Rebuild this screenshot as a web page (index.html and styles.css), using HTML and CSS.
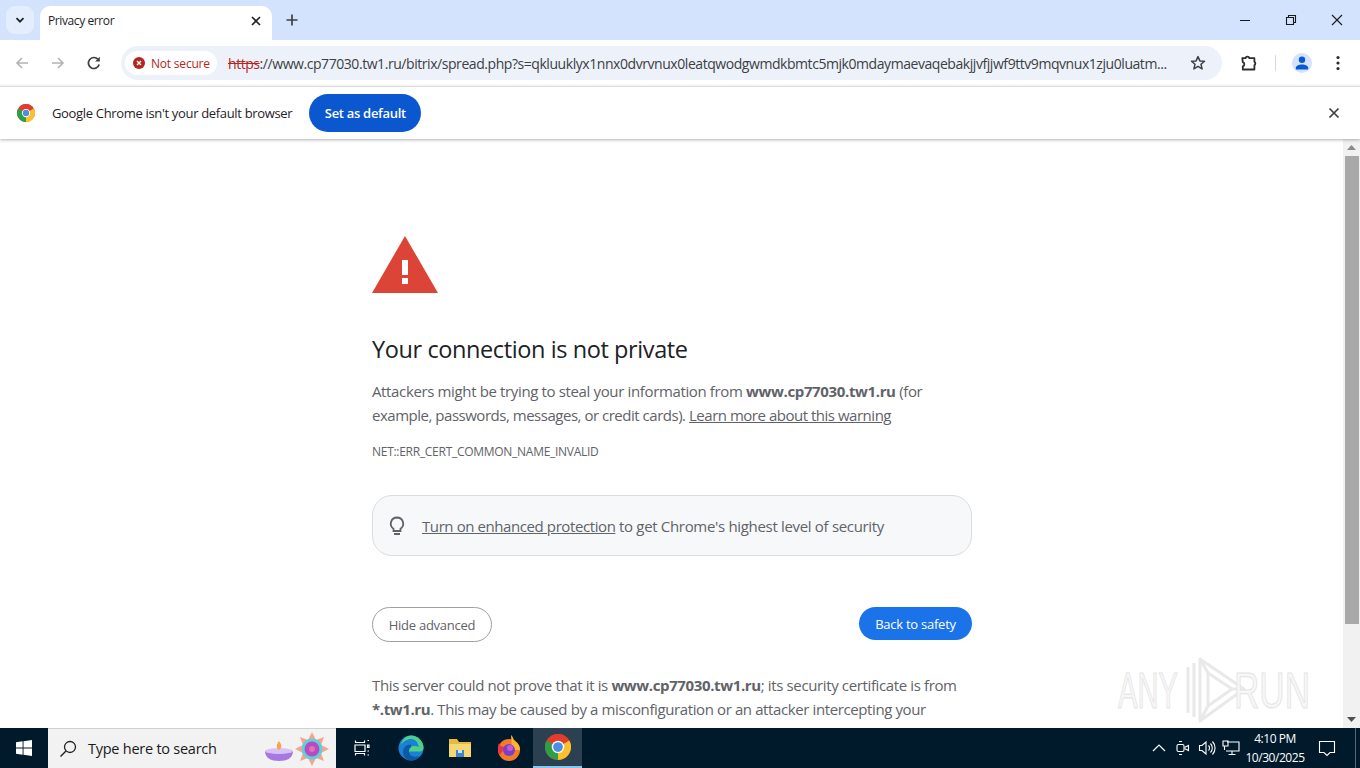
FILE: index.html
```html
<!DOCTYPE html>
<html lang="en">
<head>
<meta charset="utf-8">
<title>Privacy error</title>
<link rel="stylesheet" href="styles.css">
</head>
<body>
<div class="screen">
  <header class="tabstrip">
    <div class="tabsearch"><svg width="12" height="12" viewBox="0 0 12 12"><path d="M2.500 4.200 6 7.700l3.500-3.500" fill="none" stroke="#1f2328" stroke-width="1.800"/></svg></div>
    <div class="tab">
      <span class="tabtitle">Privacy error</span>
      <svg class="tabclose" width="12" height="12" viewBox="0 0 12 12"><path d="M2 2l8 8M10 2l-8 8" stroke="#1f2328" stroke-width="1.600"/></svg>
    </div>
    <svg class="newtab" width="14" height="14" viewBox="0 0 14 14"><path d="M7 1.500v11M1.500 7h11" stroke="#3c4043" stroke-width="1.700"/></svg>
    <div class="winctl">
      <svg width="46" height="40" viewBox="0 0 46 40"><path d="M18 20.500h10" stroke="#1a1a1a" stroke-width="1"/></svg>
      <svg width="46" height="40" viewBox="0 0 46 40"><path d="M18.500 17.500h7v7h-7zM20.500 17.500v-2h7v7h-2" fill="none" stroke="#1a1a1a" stroke-width="1.100"/></svg>
      <svg width="46" height="40" viewBox="0 0 46 40"><path d="M18 15l10 10M28 15l-10 10" stroke="#1a1a1a" stroke-width="1.100"/></svg>
    </div>
  </header>

  <nav class="toolbar">
    <svg class="navicon" width="16" height="16" viewBox="0 0 16 16"><path d="M14 8H3M8 3 3 8l5 5" fill="none" stroke="#b0b3b7" stroke-width="1.600"/></svg>
    <svg class="navicon" width="16" height="16" viewBox="0 0 16 16"><path d="M2 8h11M8 3l5 5-5 5" fill="none" stroke="#b0b3b7" stroke-width="1.600"/></svg>
    <svg class="navicon" width="16" height="16" viewBox="0 0 16 16"><path d="M13.200 9.500A5.500 5.500 0 1 1 12 4.300" fill="none" stroke="#3c4043" stroke-width="1.700"/><path d="M13.800 1.800v4.600H9.200z" fill="#3c4043"/></svg>
    <div class="omnibox">
      <div class="chip">
        <svg width="12" height="12" viewBox="0 0 12 12"><circle cx="6" cy="6" r="6" fill="#b3261e"/><path d="M4 4l4 4M8 4 4 8" stroke="#fff" stroke-width="1.400"/></svg>
        <span>Not secure</span>
      </div>
      <div class="url"><span class="scheme">https</span>://www.cp77030.tw1.ru/bitrix/spread.php?s=qkluuklyx1nnx0dvrvnux0leatqwodgwmdkbmtc5mjk0mdaymaevaqebakjjvfjjwf9ttv9mqvnux1zju0luatm...</div>
      <svg class="star" width="16" height="16" viewBox="0 0 16 16"><path d="M8 1.600l1.900 4.300 4.600.4-3.500 3 1.100 4.600L8 11.400l-4.100 2.500L5 9.300l-3.500-3 4.600-.4z" fill="none" stroke="#3c4043" stroke-width="1.500" stroke-linejoin="round"/></svg>
    </div>
    <svg class="ext" width="18" height="18" viewBox="0 0 18 18"><path d="M2.300 4.200h3.200a2 2 0 0 1 3.900 0h5v3.600a2 2 0 0 1 0 3.400v4.300H2.800v-3.200a2.200 2.200 0 0 0 0-4.200z" fill="none" stroke="#2b2e31" stroke-width="1.800" stroke-linejoin="round"/></svg>
    <span class="tooldiv"></span>
    <div class="avatar"><svg width="14" height="14" viewBox="0 0 14 14"><circle cx="7" cy="3.800" r="3.200" fill="#0b57d0"/><path d="M0.800 13.400v-1.600c0-2 2.800-3.400 6.200-3.400s6.200 1.400 6.200 3.400v1.600z" fill="#0b57d0"/></svg></div>
    <svg class="kebab" width="4" height="16" viewBox="0 0 4 16"><circle cx="2" cy="2.500" r="1.600" fill="#2b2e31"/><circle cx="2" cy="8" r="1.600" fill="#2b2e31"/><circle cx="2" cy="13.500" r="1.600" fill="#2b2e31"/></svg>
  </nav>

  <aside class="infobar">
    <svg class="chromelogo" width="18" height="18" viewBox="0 0 48 48"><circle cx="24" cy="24" r="24" fill="#e33b2e"/><path d="M24 24 44.800 12A24 24 0 0 1 24 48z" fill="#fbc02d"/><path d="M24 24 24 48A24 24 0 0 1 3.200 12z" fill="#2f9e44"/><path d="M3.200 12A24 24 0 0 1 44.800 12H24z" fill="#e33b2e"/><circle cx="24" cy="24" r="11" fill="#fff"/><circle cx="24" cy="24" r="8.500" fill="#4a90e2"/></svg>
    <span class="infotext">Google Chrome isn't your default browser</span>
    <button class="setdefault">Set as default</button>
    <svg class="infoclose" width="12" height="12" viewBox="0 0 12 12"><path d="M1.500 1.500l9 9M10.500 1.500l-9 9" stroke="#3c4043" stroke-width="1.700"/></svg>
  </aside>

  <div class="viewport">
    <main class="page">
      <svg class="warn" width="66" height="57" viewBox="0 0 66 57"><path d="M33 0 66 57H0z" fill="#db4437"/><path d="M30 24h6v15h-6zM30 42h6v6h-6z" fill="#fff"/></svg>
      <h1>Your connection is not private</h1>
      <p class="lead">Attackers might be trying to steal your information from <b>www.cp77030.tw1.ru</b> (for<br><span class="tight">example, passwords, messages, or credit cards). <a href="#">Learn more about this warning</a></span></p>
      <div class="errcode">NET::ERR_CERT_COMMON_NAME_INVALID</div>
      <div class="promo">
        <svg width="18" height="20" viewBox="0 0 18 20"><path d="M9 1.500a6.200 6.200 0 0 0-3.500 11.300v2.200h7v-2.200A6.200 6.200 0 0 0 9 1.500z" fill="none" stroke="#5f6368" stroke-width="1.800"/><path d="M6 18h6" stroke="#5f6368" stroke-width="2"/></svg>
        <span><a href="#">Turn on enhanced protection</a> to get Chrome's highest level of security</span>
      </div>
      <div class="actions">
        <button class="hide">Hide advanced</button>
        <button class="safety">Back to safety</button>
      </div>
      <p class="detail">This server could not prove that it is <b>www.cp77030.tw1.ru</b>; its security certificate is from<br><span class="tight2"><b>*.tw1.ru</b>. This may be caused by a misconfiguration or an attacker intercepting your</span></p>
    </main>
    <div class="scrollbar">
      <svg width="9" height="5" viewBox="0 0 9 5"><path d="M4.500 0 9 5H0z" fill="#8a8a8a"/></svg>
      <div class="thumb"></div>
      <svg width="9" height="5" viewBox="0 0 9 5"><path d="M0 0h9L4.500 5z" fill="#505050"/></svg>
    </div>
    <svg class="watermark" width="200" height="70" viewBox="0 0 200 70">
      <g class="wm-shape">
        <path d="M74 12v46M80 8v54"/>
        <path d="M86 4l44 30-44 32zM94 18l24 16-24 17z"/>
        <path d="M86 4l8 14M86 66l8-15M130 34h-12"/>
      </g>
      <text class="wm-text" x="4" y="53" textLength="60" lengthAdjust="spacingAndGlyphs">ANY</text>
      <text class="wm-text" x="120" y="53" textLength="76" lengthAdjust="spacingAndGlyphs">RUN</text>
    </svg>
  </div>

  <footer class="taskbar">
    <div class="start"><svg width="16" height="16" viewBox="0 0 16 16"><path d="M0 2.200 6.600 1.300v6.200H0zM7.500 1.200 16 0v7.500H7.500zM0 8.500h6.600v6.200L0 13.800zM7.500 8.500H16V16l-8.500-1.200z" fill="#fff"/></svg></div>
    <div class="search">
      <svg width="18" height="18" viewBox="0 0 18 18"><circle cx="11" cy="7" r="5.500" fill="none" stroke="#222" stroke-width="1.300"/><path d="M7 11 1.500 16.500" stroke="#222" stroke-width="1.500"/></svg>
      <span>Type here to search</span>
      <svg class="diwali" width="66" height="34" viewBox="0 0 66 34">
        <path d="M1 19h28c0 7-6 10-14 10S1 26 1 19z" fill="#a678e0"/><ellipse cx="15" cy="19" rx="14" ry="3" fill="#d8c2f5"/><path d="M15 9c3 4 3 7 0 9-3-2-3-5 0-9z" fill="#f5a54a"/>
        <g fill="#f6a58c"><path d="M48 0l4 8h-8zM48 34l-4-8h8zM31 17l8-4v8zM65 17l-8 4v-8zM36 5l8 3-5 5zM60 5l-3 8-5-5zM36 29l3-8 5 5zM60 29l-8-3 5-5z"/></g>
        <circle cx="48" cy="17" r="10.500" fill="#5fd0d8"/><circle cx="48" cy="17" r="7.500" fill="#b44cc4"/><circle cx="48" cy="17" r="3" fill="#e36fb5"/>
      </svg>
    </div>
    <div class="taskicons">
      <div class="ticon"><svg class="tview" width="18" height="18" viewBox="0 0 18 18"><path d="M3.500 1.500v2h9v-2M3.500 16.500v-2h9v2M3 6h10v6.500H3z" fill="none" stroke="#fff" stroke-width="1.200"/><path d="M15.500 1.500h1.500M15.500 6h1.500v2.500h-1.500zM15.500 12h1.500M15.500 16h1.500" stroke="#fff" stroke-width="1.200" fill="none"/></svg></div>
      <div class="ticon"><svg width="26" height="26" viewBox="0 0 26 26"><circle cx="13" cy="13" r="12.500" fill="#1a82d6"/><path d="M13 .5A12.500 12.500 0 0 1 25.500 13c0 2-1 3.500-4 3.500H11c0-3.500 2.500-5.500 5.500-5.500 2.500 0 4.500 1 4.500 1C19.500 6 16.500 4 13 4 9 4 5 6.500 3 10 4 4.500 8 .5 13 .5z" fill="#4fd08a"/><path d="M13 12c-2.500 1-3 5-.5 8 2 2 6 2.500 10 .5-2 3-5.500 5-9.500 5-4 0-7.500-3-8-8C5 12 9 9 13 9.500z" fill="#0c59a6"/></svg></div>
      <div class="ticon"><svg width="24" height="20" viewBox="0 0 24 20"><path d="M1 1h8l2 3h12v15H1z" fill="#e8b93e"/><path d="M1 6h22v13H1z" fill="#f7d774"/><path d="M8 12h8v7H8z" fill="#3f86c9"/><path d="M10 12h4v3h-4z" fill="#cfe3f5"/></svg></div>
      <div class="ticon"><svg width="24" height="26" viewBox="0 0 24 26"><circle cx="12" cy="15" r="11" fill="#f4792b"/><path d="M14 0c3 3 2 5 5 7 3 2 4 5 4 8h-8z" fill="#ffb52e"/><path d="M2 8c1 3 3 4 6 4l-5 8C1 17 0 12 2 8z" fill="#e8344a"/><circle cx="12" cy="15" r="6" fill="#7b3fc9"/><circle cx="13" cy="13" r="3" fill="#c65ad1"/></svg></div>
      <div class="ticon active"><svg width="26" height="26" viewBox="0 0 48 48"><circle cx="24" cy="24" r="24" fill="#e33b2e"/><path d="M24 24 44.800 12A24 24 0 0 1 24 48z" fill="#fbc02d"/><path d="M24 24 24 48A24 24 0 0 1 3.200 12z" fill="#2f9e44"/><path d="M3.200 12A24 24 0 0 1 44.800 12H24z" fill="#e33b2e"/><circle cx="24" cy="24" r="11.500" fill="#fff"/><circle cx="24" cy="24" r="9" fill="#4a90e2"/></svg></div>
    </div>
    <div class="tray">
      <svg class="t-chev" width="14" height="8" viewBox="0 0 14 8"><path d="M1 7l6-6 6 6" fill="none" stroke="#fff" stroke-width="1.200"/></svg>
      <svg class="t-cam" width="16" height="16" viewBox="0 0 16 16"><rect x="2" y="4.500" width="7" height="7" rx="1.500" fill="none" stroke="#fff" stroke-width="1.100"/><path d="M9.500 7.500l4-2v5l-4-2" fill="none" stroke="#fff" stroke-width="1.100"/><path d="M4 1.500h3M4 14.500h3" stroke="#fff"/></svg>
      <svg class="t-vol" width="18" height="16" viewBox="0 0 18 16"><path d="M1.500 5.500h2.500l4-3.500v12l-4-3.500H1.500z" fill="none" stroke="#fff" stroke-width="1.100"/><path d="M10.500 5.500a3.500 3.500 0 0 1 0 5M12.500 3.500a6.500 6.500 0 0 1 0 9M14.500 1.500a9.500 9.500 0 0 1 0 13" fill="none" stroke="#fff" stroke-width="1.100"/></svg>
      <svg class="t-net" width="18" height="16" viewBox="0 0 18 16"><path d="M5 2h12v9H4M10 11v3M6.500 14.500h7M1 1h5v5H1zM2.500 6v4" fill="none" stroke="#fff" stroke-width="1.100"/></svg>
      <div class="clock"><span>4:10 PM</span><span>10/30/2025</span></div>
      <svg class="notify" width="18" height="18" viewBox="0 0 18 18"><path d="M1.500 2.500h15v11h-4.500l-3 3-3-3h-4.500z" fill="none" stroke="#fff" stroke-width="1.100"/></svg>
    </div>
    <div class="showdesktop"></div>
  </footer>
</div>
</body>
</html>
```
FILE: styles.css
```css
* { box-sizing: border-box; }
html, body { margin: 0; padding: 0; }
body { width: 1360px; height: 768px; overflow: hidden; font-family: "Open Sans", "Noto Sans", sans-serif; background: #fff; }
button { font-family: inherit; cursor: default; }
svg { display: block; flex: none; }
.screen { width: 1360px; height: 768px; display: flex; flex-direction: column; }

.tabstrip { height: 40px; background: #d3e3fd; display: flex; align-items: flex-end; padding-left: 6px; flex: none; }
.tabsearch { width: 28px; height: 28px; margin-bottom: 6px; background: #e4edfc; border-radius: 9px; display: flex; align-items: center; justify-content: center; }
.tab { width: 232px; height: 34px; margin-left: 6px; background: #fff; border-radius: 10px 10px 0 0; display: flex; align-items: center; justify-content: space-between; padding: 0 10px 0 8px; }
.tabtitle { font-size: 12px; letter-spacing: -.4px; color: #1f2328; margin-bottom: 6px; }
.tabclose { margin-bottom: 4px; }
.newtab { margin: 0 0 13px 13px; }
.winctl { margin-left: auto; display: flex; }

.toolbar { height: 46px; background: #fff; display: flex; align-items: center; padding-left: 14px; border-radius: 8px 8px 0 0; flex: none; }
.navicon { margin-right: 20px; }
.omnibox { width: 1101px; height: 34px; margin-left: -1px; background: #edf2fa; border-radius: 17px; display: flex; align-items: center; padding-left: 4px; }
.chip { height: 24px; width: 92px; background: #fff; border-radius: 12px; display: flex; align-items: center; gap: 6px; padding-left: 8px; font-size: 12px; letter-spacing: -.2px; color: #b3261e; flex: none; }
.url { font-size: 14px; letter-spacing: -.44px; color: #3c4043; margin-left: 11px; white-space: nowrap; width: 944px; overflow: hidden; flex: none; }
.scheme { color: #b3261e; text-decoration: line-through; }
.star { margin-left: 18px; }
.ext { margin-left: 18px; }
.tooldiv { width: 1px; height: 16px; background: #d6d8da; margin-left: 17px; }
.avatar { width: 20px; height: 20px; margin-left: 16px; border-radius: 50%; background: #d3e3fd; display: flex; align-items: center; justify-content: center; }
.kebab { margin-left: 24px; }

.infobar { height: 53px; flex: none; display: flex; align-items: center; padding-left: 17px; border-top: 1px solid #dedfe1; position: relative; z-index: 2; box-shadow: 0 1px 3px rgba(60,64,67,.4); background: #fff; }
.infotext { font-size: 13px; letter-spacing: -.33px; color: #1f2328; margin-left: 17px; }
.setdefault { width: 112px; height: 38px; margin-left: 17px; border: 0; border-radius: 19px; background: #0b57d0; color: #fff; font-size: 13px; font-weight: 600; letter-spacing: -.3px; padding: 0; }
.infoclose { margin-left: auto; margin-right: 20px; }

.viewport { flex: 1; min-height: 0; display: flex; position: relative; background: #fff; overflow: hidden; }
.page { flex: 1; padding: 97px 0 0 372px; color: #5f6368; font-size: 15px; }
.warn { margin-bottom: 41px; }
h1 { margin: 0; font-size: 23.5px; font-weight: 400; line-height: 30px; letter-spacing: -.4px; color: #202124; }
.lead { margin: 15px 0 0; line-height: 24px; letter-spacing: -.36px; white-space: nowrap; }
.tight { letter-spacing: -.48px; }
.lead a, .promo a { color: #5f6368; text-decoration: underline; }
.errcode { margin-top: 13px; font-size: 12px; line-height: 24px; letter-spacing: -.28px; }
.promo { width: 600px; height: 61px; margin-top: 31px; background: #f7f8fa; border: 1px solid #dadce0; border-radius: 20px; display: flex; align-items: center; gap: 16px; padding-left: 15px; letter-spacing: -.32px; white-space: nowrap; }
.promo a { letter-spacing: -.41px; }
.actions { width: 600px; margin-top: 51px; display: flex; justify-content: space-between; }
.hide { width: 120px; height: 35px; background: #fff; border: 1px solid #9aa0a6; border-radius: 18px; color: #5f6368; font-size: 13px; letter-spacing: -.25px; padding: 0; }
.safety { width: 113px; height: 33px; background: #1a73e8; border: 0; border-radius: 17px; color: #fff; font-size: 13px; letter-spacing: -.25px; padding: 0; }
.detail { margin: 31px 0 0; line-height: 24px; letter-spacing: -.37px; white-space: nowrap; }
.tight2 { letter-spacing: -.39px; }

.scrollbar { width: 17px; flex: none; background: #f1f1f1; display: flex; flex-direction: column; align-items: center; justify-content: space-between; padding: 6px 0 6px; position: relative; }
.thumb { width: 14px; position: absolute; left: 2px; top: 17px; height: 468px; background: #a8a8a8; }

.watermark { position: absolute; left: 1114px; top: 516px; overflow: visible; }
.wm-text { font-family: "Liberation Sans", sans-serif; font-size: 50px; fill: #f7f7f7; stroke: #e3e3e3; stroke-width: 1; }
.wm-shape { fill: none; stroke: #e9e9e9; stroke-width: 3; stroke-linejoin: round; }

.taskbar { height: 40px; flex: none; background: #001a2b; display: flex; align-items: stretch; color: #fff; }
.start { width: 48px; display: flex; align-items: center; justify-content: center; }
.search { width: 288px; background: #f2f2f2; border-top: 1px solid #d0d0d0; display: flex; align-items: center; padding-left: 11px; gap: 11px; color: #1a1a1a; font-size: 14.5px; letter-spacing: -.25px; position: relative; }
.diwali { position: absolute; left: 216px; top: 3px; }
.taskicons { display: flex; margin-left: 1px; }
.ticon { width: 49px; display: flex; align-items: center; justify-content: center; }
.tview { margin-right: 2px; }
.ticon.active { background: #2b4050; border-bottom: 2px solid #8cc5ec; }
.tray { margin-left: auto; display: flex; align-items: center; }
.t-cam { margin-left: 9px; }
.t-vol { margin-left: 7px; }
.t-net { margin-left: 6px; }
.clock { width: 60px; margin-left: 5px; display: flex; flex-direction: column; align-items: center; font-size: 12px; line-height: 19px; letter-spacing: -.45px; }
.notify { margin-left: 13px; }
.showdesktop { width: 5px; margin-left: 19px; border-left: 1px solid #5a6670; }
```
